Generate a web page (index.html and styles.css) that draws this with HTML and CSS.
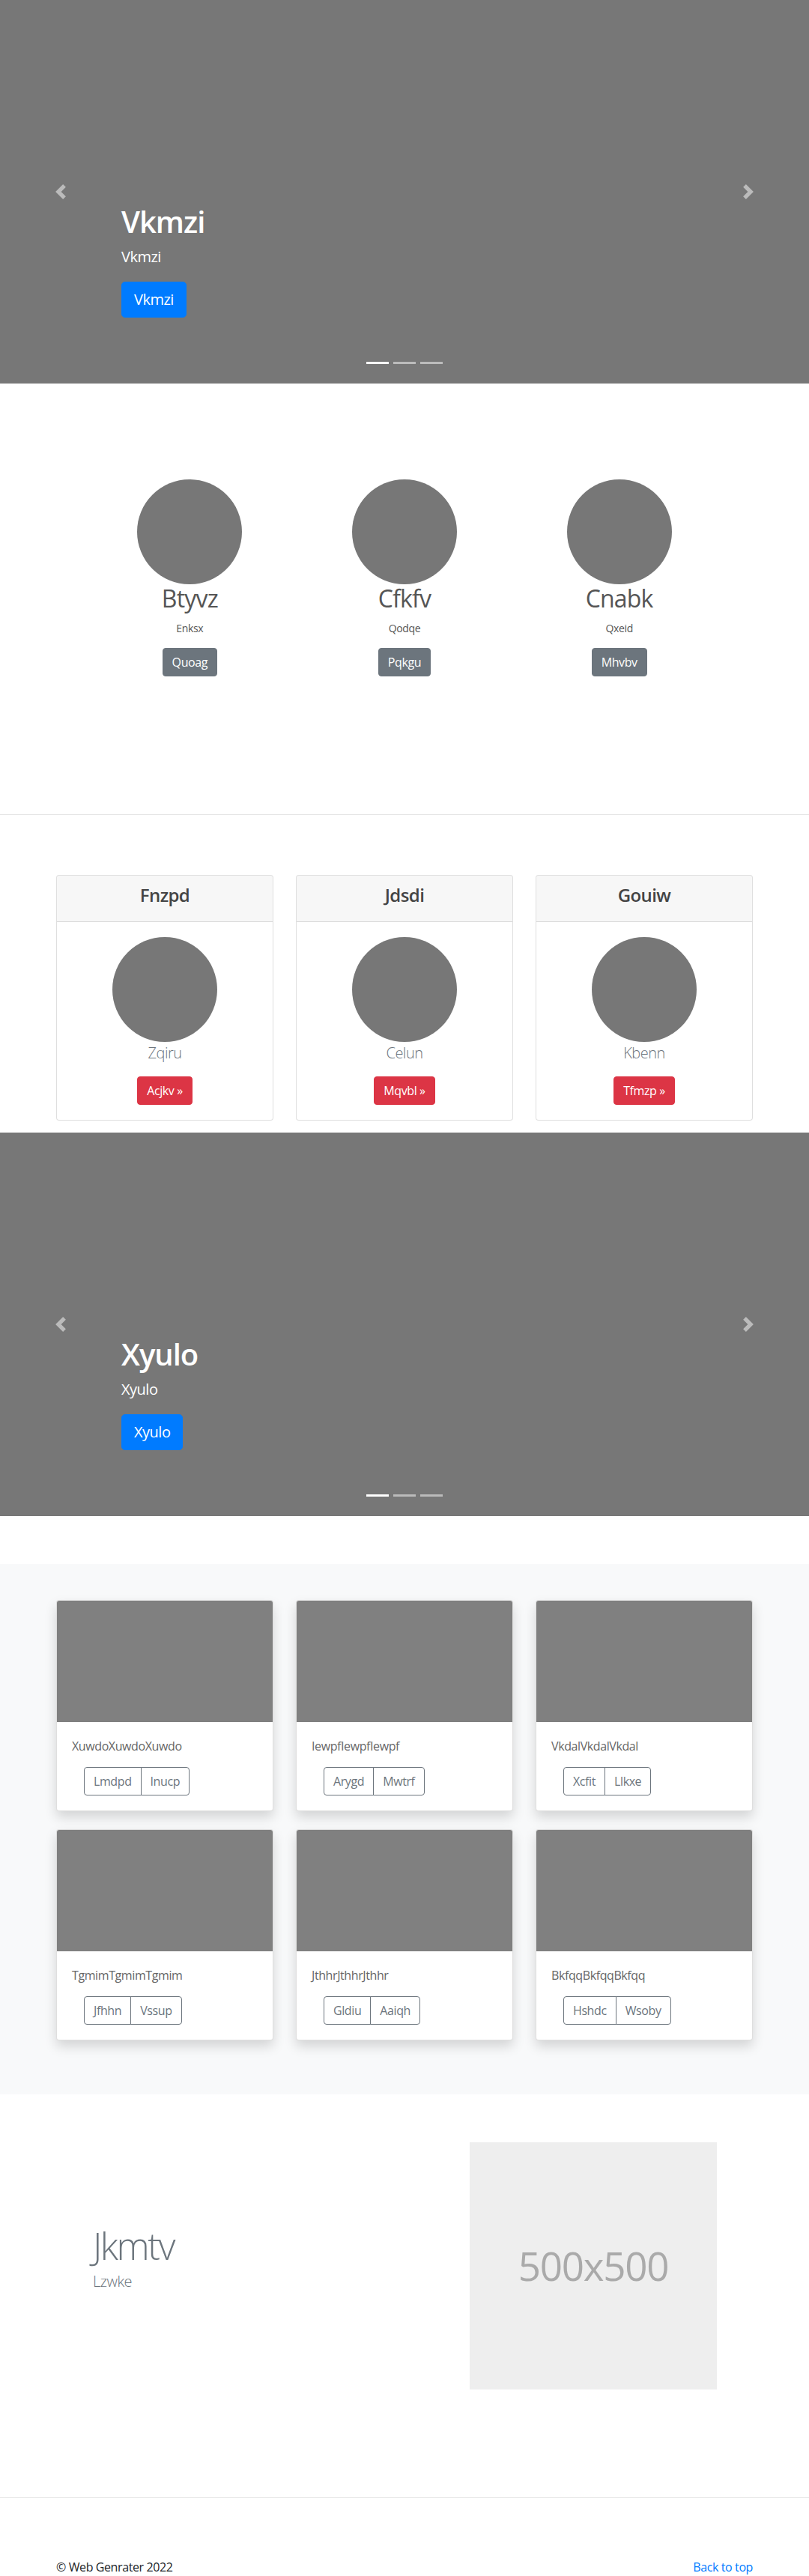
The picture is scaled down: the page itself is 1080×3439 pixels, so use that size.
FILE: index.html
```html
<!DOCTYPE html>
<html lang="en">
<head>
<meta charset="utf-8">
<title>Web Genrater</title>
<link rel="stylesheet" href="styles.css">
</head>
<body>

<div class="carousel">
  <a class="ctrl ctrl-prev" href="#"><svg viewBox="0 0 8 8"><path fill="#fff" d="M5.25 0l-4 4 4 4 1.5-1.5L4.25 4l2.5-2.5L5.25 0z"/></svg></a>
  <a class="ctrl ctrl-next" href="#"><svg viewBox="0 0 8 8"><path fill="#fff" d="M2.75 0l-1.5 1.5L3.75 4l-2.5 2.5L2.75 8l4-4-4-4z"/></svg></a>
  <div class="caption">
    <h1>Vkmzi</h1>
    <p>Vkmzi</p>
    <a class="btn btn-lg btn-primary" href="#">Vkmzi</a>
  </div>
  <ol class="indicators"><li class="active"></li><li></li><li></li></ol>
</div>

<section class="team">
  <div class="team-grid">
    <div class="member">
      <div class="avatar"></div>
      <h2>Btyvz</h2>
      <p class="role">Enksx</p>
      <div class="actions"><a class="btn btn-secondary" href="#">Quoag</a></div>
    </div>
    <div class="member">
      <div class="avatar"></div>
      <h2>Cfkfv</h2>
      <p class="role">Qodqe</p>
      <div class="actions"><a class="btn btn-secondary" href="#">Pqkgu</a></div>
    </div>
    <div class="member">
      <div class="avatar"></div>
      <h2>Cnabk</h2>
      <p class="role">Qxeid</p>
      <div class="actions"><a class="btn btn-secondary" href="#">Mhvbv</a></div>
    </div>
  </div>
</section>

<hr class="divider">

<section class="pricing">
  <div class="pcard">
    <div class="pcard-header"><h4>Fnzpd</h4></div>
    <div class="pcard-body">
      <div class="avatar"></div>
      <p class="lead">Zqiru</p>
      <div class="actions"><a class="btn btn-danger" href="#">Acjkv »</a></div>
    </div>
  </div>
  <div class="pcard">
    <div class="pcard-header"><h4>Jdsdi</h4></div>
    <div class="pcard-body">
      <div class="avatar"></div>
      <p class="lead">Celun</p>
      <div class="actions"><a class="btn btn-danger" href="#">Mqvbl »</a></div>
    </div>
  </div>
  <div class="pcard">
    <div class="pcard-header"><h4>Gouiw</h4></div>
    <div class="pcard-body">
      <div class="avatar"></div>
      <p class="lead">Kbenn</p>
      <div class="actions"><a class="btn btn-danger" href="#">Tfmzp »</a></div>
    </div>
  </div>
</section>

<div class="carousel carousel-second">
  <a class="ctrl ctrl-prev" href="#"><svg viewBox="0 0 8 8"><path fill="#fff" d="M5.25 0l-4 4 4 4 1.5-1.5L4.25 4l2.5-2.5L5.25 0z"/></svg></a>
  <a class="ctrl ctrl-next" href="#"><svg viewBox="0 0 8 8"><path fill="#fff" d="M2.75 0l-1.5 1.5L3.75 4l-2.5 2.5L2.75 8l4-4-4-4z"/></svg></a>
  <div class="caption">
    <h1>Xyulo</h1>
    <p>Xyulo</p>
    <a class="btn btn-lg btn-primary" href="#">Xyulo</a>
  </div>
  <ol class="indicators"><li class="active"></li><li></li><li></li></ol>
</div>

<section class="album">
  <div class="album-grid">
    <div class="acard">
      <div class="thumb"></div>
      <div class="acard-body">
        <p>XuwdoXuwdoXuwdo</p>
        <div class="btn-group"><a class="btn btn-outline" href="#">Lmdpd</a><a class="btn btn-outline" href="#">Inucp</a></div>
      </div>
    </div>
    <div class="acard">
      <div class="thumb"></div>
      <div class="acard-body">
        <p>IewpfIewpfIewpf</p>
        <div class="btn-group"><a class="btn btn-outline" href="#">Arygd</a><a class="btn btn-outline" href="#">Mwtrf</a></div>
      </div>
    </div>
    <div class="acard">
      <div class="thumb"></div>
      <div class="acard-body">
        <p>VkdalVkdalVkdal</p>
        <div class="btn-group"><a class="btn btn-outline" href="#">Xcfit</a><a class="btn btn-outline" href="#">Llkxe</a></div>
      </div>
    </div>
    <div class="acard">
      <div class="thumb"></div>
      <div class="acard-body">
        <p>TgmimTgmimTgmim</p>
        <div class="btn-group"><a class="btn btn-outline" href="#">Jfhhn</a><a class="btn btn-outline" href="#">Vssup</a></div>
      </div>
    </div>
    <div class="acard">
      <div class="thumb"></div>
      <div class="acard-body">
        <p>JthhrJthhrJthhr</p>
        <div class="btn-group"><a class="btn btn-outline" href="#">Gldiu</a><a class="btn btn-outline" href="#">Aaiqh</a></div>
      </div>
    </div>
    <div class="acard">
      <div class="thumb"></div>
      <div class="acard-body">
        <p>BkfqqBkfqqBkfqq</p>
        <div class="btn-group"><a class="btn btn-outline" href="#">Hshdc</a><a class="btn btn-outline" href="#">Wsoby</a></div>
      </div>
    </div>
  </div>
</section>

<section class="featurette">
  <div class="featurette-row">
    <div class="feat-text">
      <h2 class="feat-heading">Jkmtv</h2>
      <p class="lead">Lzwke</p>
    </div>
    <div class="feat-img">
      <div class="placeholder">500x500</div>
    </div>
  </div>
</section>

<hr class="divider">

<footer class="footer">
  <p>© Web Genrater 2022</p>
  <p><a href="#">Back to top</a></p>
</footer>

</body>
</html>
```

FILE: styles.css
```css
* { box-sizing: border-box; letter-spacing: -0.025em; }

body {
  margin: 0;
  font-family: "Open Sans", "Noto Sans", sans-serif;
  font-size: 16px;
  line-height: 1.5;
  color: #212529;
  background: #fff;
}

/* Carousel */
.carousel {
  position: relative;
  height: 512px;
  background: #777;
  overflow: hidden;
}
.carousel-second { margin-bottom: 64px; }

.ctrl {
  position: absolute;
  top: 0;
  bottom: 0;
  width: 15%;
  display: flex;
  align-items: center;
  justify-content: center;
  opacity: .5;
}
.ctrl-prev { left: 0; }
.ctrl-next { right: 0; }
.ctrl svg { width: 20px; height: 20px; display: block; }

.caption {
  position: absolute;
  left: 15%;
  right: 15%;
  top: 272px;
  color: #fff;
}
.caption h1 {
  font-size: 40px;
  font-weight: 600;
  line-height: 1.2;
  margin: 0 0 8px;
}
.caption p {
  font-size: 20px;
  line-height: 30px;
  margin: 0 0 18px;
}

.indicators {
  position: absolute;
  left: 0;
  right: 0;
  bottom: 0;
  margin: 0 0 16px;
  padding: 0;
  list-style: none;
  display: flex;
  justify-content: center;
}
.indicators li {
  width: 30px;
  height: 23px;
  margin: 0 3px;
  border-top: 10px solid transparent;
  border-bottom: 10px solid transparent;
  background: #fff;
  background-clip: padding-box;
  opacity: .5;
}
.indicators li.active { opacity: 1; }

/* Buttons */
.btn {
  display: inline-block;
  font-weight: 400;
  text-align: center;
  white-space: nowrap;
  border: 1px solid transparent;
  padding: 6px 12px;
  font-size: 16px;
  line-height: 24px;
  border-radius: 4px;
  text-decoration: none;
  color: #fff;
}
.btn-lg {
  padding: 8px 16px;
  font-size: 20px;
  line-height: 30px;
  border-radius: 4.8px;
}
.btn-primary { background: #007bff; border-color: #007bff; }
.btn-secondary { background: #6c757d; border-color: #6c757d; }
.btn-danger { background: #dc3545; border-color: #dc3545; }
.btn-outline { background: transparent; color: #6c757d; border-color: #6c757d; }

.actions { display: flex; justify-content: center; }

/* Team */
.team { padding: 128px 0 88px; }
.team-grid {
  width: 860px;
  margin: 0 auto;
  display: grid;
  grid-template-columns: repeat(3, 1fr);
  text-align: center;
}
.avatar {
  width: 140px;
  height: 140px;
  border-radius: 50%;
  background: #777;
  margin: 0 auto;
}
.team h2 {
  font-size: 32px;
  font-weight: 400;
  line-height: 1.2;
  margin: 0 0 10px;
  color: #555;
}
.team .role {
  font-size: 14px;
  line-height: 21px;
  margin: 0 0 16px;
  color: #555;
}
.team .actions { margin-bottom: 16px; }

.divider {
  margin: 80px 0;
  border: 0;
  border-top: 1px solid rgba(0, 0, 0, .1);
  height: 0;
}

/* Pricing cards */
.pricing {
  width: 930px;
  margin: 0 auto 16px;
  display: grid;
  grid-template-columns: repeat(3, 1fr);
  gap: 30px;
  text-align: center;
}
.pcard {
  border: 1px solid rgba(0, 0, 0, .125);
  border-radius: 4px;
  background: #fff;
  overflow: hidden;
}
.pcard-header {
  background: rgba(0, 0, 0, .03);
  padding: 12px 20px;
  border-bottom: 1px solid rgba(0, 0, 0, .125);
}
.pcard-header h4 {
  font-size: 24px;
  font-weight: 600;
  line-height: 1.2;
  margin: 0 0 8px;
  color: #444;
}
.pcard-body { padding: 20px; }
.lead {
  font-size: 20px;
  font-weight: 300;
  line-height: 30px;
  margin: 0 0 16px;
  color: #6c757d;
}

/* Album */
.album {
  background: #f8f9fa;
  padding: 48px 0 72px;
}
.album-grid {
  width: 930px;
  margin: 0 auto;
  display: grid;
  grid-template-columns: repeat(3, 1fr);
  column-gap: 30px;
  row-gap: 24px;
}
.acard {
  background: #fff;
  border: 1px solid rgba(0, 0, 0, .125);
  border-radius: 4px;
  box-shadow: 0 8px 16px rgba(0, 0, 0, .15);
  overflow: hidden;
}
.thumb {
  height: 162px;
  background: #808080;
}
.acard-body { padding: 20px; }
.acard-body p {
  margin: 0 0 16px;
  color: #666;
}
.btn-group {
  display: inline-flex;
  margin-left: 16px;
}
.btn-group .btn:first-child { border-radius: 4px 0 0 4px; }
.btn-group .btn + .btn { margin-left: -1px; border-radius: 0 4px 4px 0; }

/* Featurette */
.featurette { padding: 64px 0; }
.featurette-row {
  width: 930px;
  margin: 0 auto;
  display: flex;
  align-items: center;
}
.feat-text {
  flex: 1;
  padding-left: 49px;
}
.feat-img { width: 378px; }
.placeholder {
  width: 330px;
  height: 330px;
  background: #eee;
  color: #aaa;
  font-size: 53px;
  display: flex;
  align-items: center;
  justify-content: center;
}
.feat-heading {
  font-size: 50px;
  font-weight: 300;
  line-height: 1;
  letter-spacing: -0.05em;
  margin: 0 0 8px;
  color: #6c757d;
}

/* Footer */
.footer {
  width: 930px;
  margin: 0 auto;
  display: flex;
  justify-content: space-between;
}
.footer p { margin: 0 0 16px; }
.footer a { color: #007bff; text-decoration: none; }
```
